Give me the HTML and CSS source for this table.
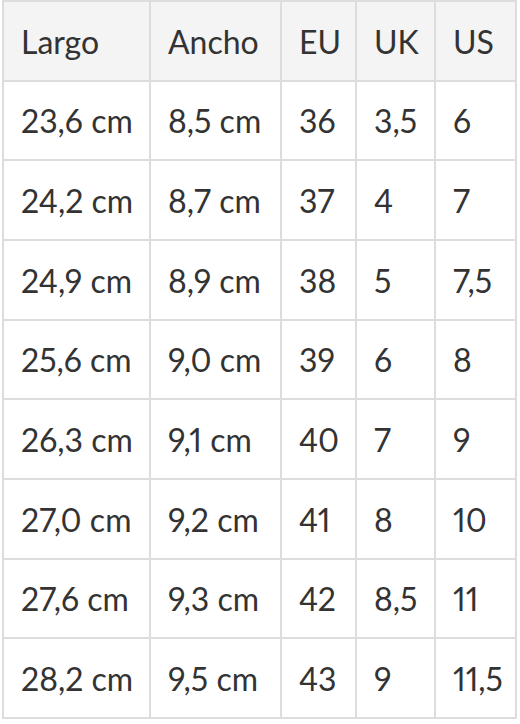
FILE: index.html
```html
<!DOCTYPE html>
<html lang="es">
<head>
<meta charset="utf-8">
<title>Tabla de tallas</title>
<link rel="stylesheet" href="styles.css">
</head>
<body>
<table class="sizes">
  <colgroup>
    <col class="c-largo"><col class="c-ancho"><col class="c-eu"><col class="c-uk"><col class="c-us">
  </colgroup>
  <thead>
    <tr><th>Largo</th><th>Ancho</th><th>EU</th><th>UK</th><th>US</th></tr>
  </thead>
  <tbody>
    <tr><td>23,6 cm</td><td>8,5 cm</td><td>36</td><td>3,5</td><td>6</td></tr>
    <tr><td>24,2 cm</td><td>8,7 cm</td><td>37</td><td>4</td><td>7</td></tr>
    <tr><td>24,9 cm</td><td>8,9 cm</td><td>38</td><td>5</td><td>7,5</td></tr>
    <tr><td>25,6 cm</td><td>9,0 cm</td><td>39</td><td>6</td><td>8</td></tr>
    <tr><td>26,3 cm</td><td>9,1 cm</td><td>40</td><td>7</td><td>9</td></tr>
    <tr><td>27,0 cm</td><td>9,2 cm</td><td>41</td><td>8</td><td>10</td></tr>
    <tr><td>27,6 cm</td><td>9,3 cm</td><td>42</td><td>8,5</td><td>11</td></tr>
    <tr><td>28,2 cm</td><td>9,5 cm</td><td>43</td><td>9</td><td>11,5</td></tr>
  </tbody>
</table>
</body>
</html>
```
FILE: styles.css
```css
html, body {
  margin: 0;
  padding: 0;
  background: #ffffff;
}
body {
  font-family: Lato, "Noto Sans", sans-serif;
  color: #333333;
}
.sizes {
  margin-left: 2px;
  border-collapse: separate;
  border-spacing: 2px;
  background: #dddddd;
  table-layout: fixed;
  width: 515px;
}
.c-largo { width: 145px; }
.c-ancho { width: 129px; }
.c-eu { width: 73px; }
.c-uk { width: 77px; }
.c-us { width: 79px; }
.sizes th,
.sizes td {
  box-sizing: border-box;
  height: 77.67px;
  padding: 2px 0 0 17px;
  line-height: 38px;
  text-align: left;
  vertical-align: middle;
  font-size: 32px;
  font-weight: 400;
  font-variant-numeric: proportional-nums;
  white-space: nowrap;
  background: #ffffff;
}
.sizes th {
  background: #f4f4f4;
}
```
